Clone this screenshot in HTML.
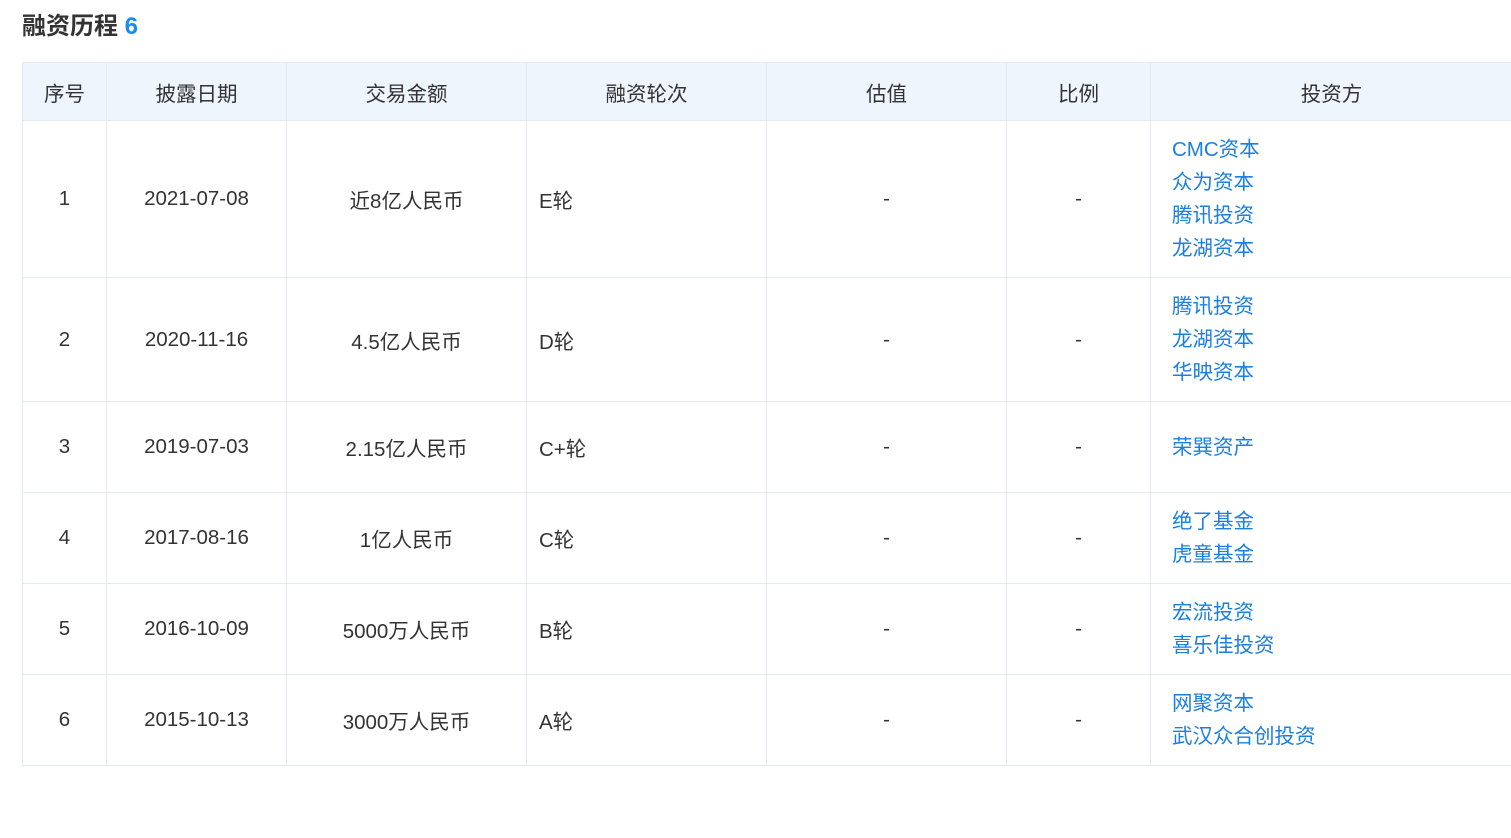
<!DOCTYPE html>
<html><head><meta charset="utf-8"><style>
body{margin:0;background:#fff;font-family:"Liberation Sans","Noto Sans CJK SC",sans-serif;color:#333;width:1511px;height:838px;overflow:hidden;position:relative}
h2{position:absolute;left:22px;top:10px;margin:0;font-size:24px;font-weight:bold;color:#333;line-height:34px}
h2 span{color:#1a8cf0}
table{position:absolute;left:22px;top:62px;border-collapse:collapse;table-layout:fixed;width:1490px;font-size:20.5px}
td,th{border:1px solid #e4eaf0;padding:0;text-align:center;vertical-align:middle}
th{background:#eef5fc;font-weight:normal;height:57px;color:#333}
td.l{text-align:left;padding-left:12px}
td.inv{text-align:left;padding-left:21px;color:#1a7fe0;line-height:33px}
</style></head><body>
<h2>融资历程 <span>6</span></h2>
<table>
<colgroup><col style="width:84px"><col style="width:180px"><col style="width:240px"><col style="width:240px"><col style="width:240px"><col style="width:144px"><col style="width:362px"></colgroup>
<tr><th>序号</th><th>披露日期</th><th>交易金额</th><th>融资轮次</th><th>估值</th><th>比例</th><th>投资方</th></tr>
<tr style="height:157px"><td>1</td><td>2021-07-08</td><td>近8亿人民币</td><td class="l">E轮</td><td>-</td><td>-</td><td class="inv">CMC资本<br>众为资本<br>腾讯投资<br>龙湖资本</td></tr>
<tr style="height:124px"><td>2</td><td>2020-11-16</td><td>4.5亿人民币</td><td class="l">D轮</td><td>-</td><td>-</td><td class="inv">腾讯投资<br>龙湖资本<br>华映资本</td></tr>
<tr style="height:91px"><td>3</td><td>2019-07-03</td><td>2.15亿人民币</td><td class="l">C+轮</td><td>-</td><td>-</td><td class="inv">荣巽资产</td></tr>
<tr style="height:91px"><td>4</td><td>2017-08-16</td><td>1亿人民币</td><td class="l">C轮</td><td>-</td><td>-</td><td class="inv">绝了基金<br>虎童基金</td></tr>
<tr style="height:91px"><td>5</td><td>2016-10-09</td><td>5000万人民币</td><td class="l">B轮</td><td>-</td><td>-</td><td class="inv">宏流投资<br>喜乐佳投资</td></tr>
<tr style="height:91px"><td>6</td><td>2015-10-13</td><td>3000万人民币</td><td class="l">A轮</td><td>-</td><td>-</td><td class="inv">网聚资本<br>武汉众合创投资</td></tr>
</table>
</body></html>
